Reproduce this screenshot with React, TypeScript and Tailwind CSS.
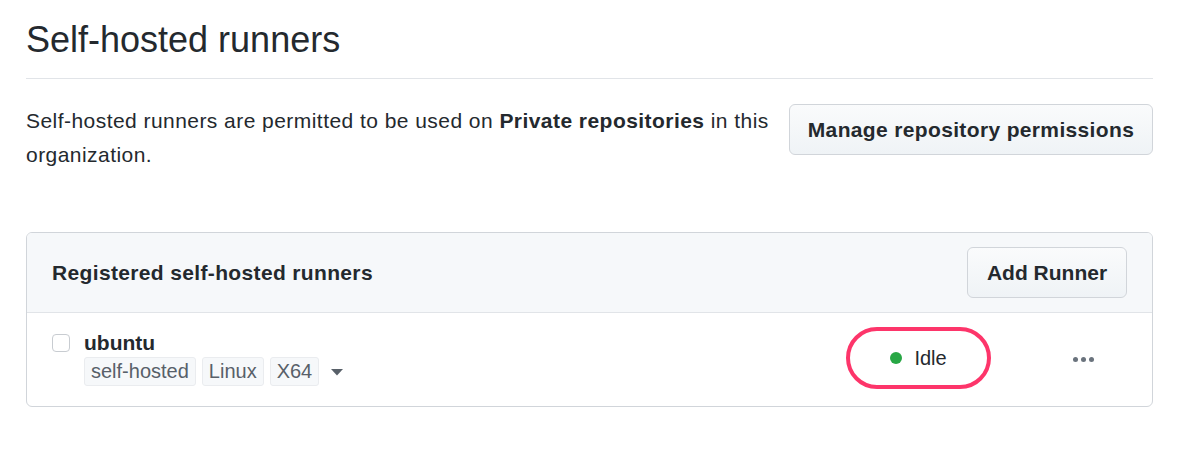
import React from "react";

const font = { fontFamily: '"Liberation Sans", Arial, sans-serif' };

function Label({ children }: { children: React.ReactNode }) {
  return (
    <span className="inline-flex h-[29px] items-center rounded-[3px] border border-[#eaecef] bg-[#f6f8fa] px-[6px] text-[20px] text-[#586069]">
      {children}
    </span>
  );
}

function GhButton({ children, className = "" }: { children: React.ReactNode; className?: string }) {
  return (
    <button
      className={`h-[51px] shrink-0 rounded-[6px] border border-[#d1d5da] bg-gradient-to-b from-[#fafbfc] to-[#eff3f6] text-[21px] font-bold text-[#24292e] ${className}`}
    >
      {children}
    </button>
  );
}

export default function App() {
  return (
    <div className="min-h-[451px] bg-white pl-[26px] text-[#24292e]" style={font}>
      <div className="w-[1127px]">
        <div className="border-b border-[#e1e4e8] pb-[16px] pt-[17px]">
          <h2 className="text-[36px] font-normal leading-[45px]">Self-hosted runners</h2>
        </div>

        <div className="mt-[25px] flex items-start gap-[13px]">
          <p className="flex-1 text-[21px] leading-[34px] tracking-[0.45px]">
            Self-hosted runners are permitted to be used on <strong className="font-bold">Private repositories</strong> in this organization.
          </p>
          <GhButton className="w-[364px] tracking-[0.35px]">Manage repository permissions</GhButton>
        </div>

        <div className="mt-[60px] overflow-hidden rounded-[6px] border border-[#d1d5da]">
          <div className="flex h-[80px] items-center justify-between border-b border-[#e1e4e8] bg-[#f6f8fa] pl-[25px] pr-[25px]">
            <h3 className="text-[21px] font-bold tracking-[0.35px]">Registered self-hosted runners</h3>
            <GhButton className="w-[160px]">Add Runner</GhButton>
          </div>

          <div className="flex h-[93px] items-center pl-[25px] pr-[25px]">
            <div className="flex flex-1 items-start gap-[14px] pb-[4px]">
              <span className="mt-[4px] block h-[18px] w-[18px] rounded-[4px] border border-[#c8ccd1] bg-white" />
              <div>
                <div className="text-[21px] font-bold leading-[26px]">ubuntu</div>
                <div className="mt-[1px] flex items-center gap-[6px]">
                  <Label>self-hosted</Label>
                  <Label>Linux</Label>
                  <Label>X64</Label>
                  <svg width="12" height="7" viewBox="0 0 12 7" className="ml-[6px] mt-[2px]">
                    <path d="M0 0h12L6 6.5z" fill="#586069" />
                  </svg>
                </div>
              </div>
            </div>

            <div className="mb-[3px] flex h-[62px] w-[145px] items-center justify-center gap-[12px] rounded-full border-[4px] border-[#fd356a] pb-[1px]">
              <span className="h-[12px] w-[12px] rounded-full bg-[#28a745]" />
              <span className="text-[20px]">Idle</span>
            </div>

            <div className="ml-[82px] mr-[33px] flex gap-[3px]">
              <span className="h-[5px] w-[5px] rounded-full bg-[#6a737d]" />
              <span className="h-[5px] w-[5px] rounded-full bg-[#6a737d]" />
              <span className="h-[5px] w-[5px] rounded-full bg-[#6a737d]" />
            </div>
          </div>
        </div>
      </div>
    </div>
  );
}
